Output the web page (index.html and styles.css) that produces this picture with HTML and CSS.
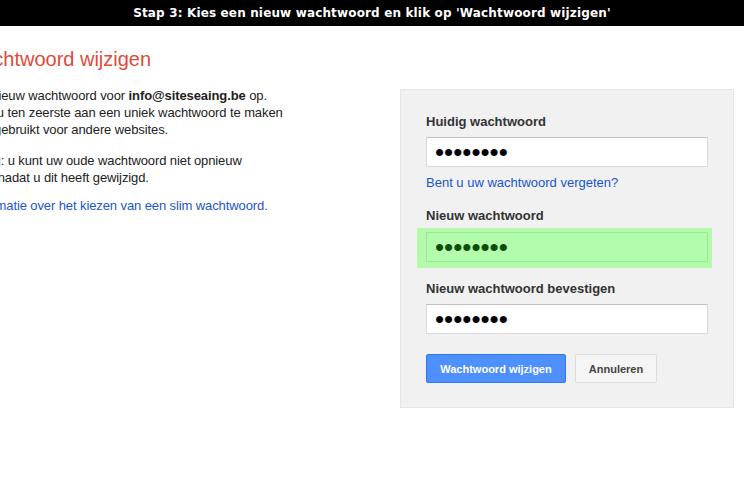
FILE: index.html
```html
<!DOCTYPE html>
<html lang="nl">
<head>
<meta charset="utf-8">
<title>Wachtwoord wijzigen</title>
<link rel="stylesheet" href="styles.css">
</head>
<body>
<div class="topbar">Stap 3: Kies een nieuw wachtwoord en klik op 'Wachtwoord wijzigen'</div>
<div class="main">
  <div class="intro">
    <h1 class="title">Wachtwoord wijzigen</h1>
    <p class="p1">Kies een nieuw wachtwoord voor <b>info@siteseaing.be</b> op.<br>We raden u ten zeerste aan een uniek wachtwoord te maken<br>dat u niet gebruikt voor andere websites.</p>
    <p class="p2">Opmerking: u kunt uw oude wachtwoord niet opnieuw<br>gebruiken nadat u dit heeft gewijzigd.</p>
    <p class="p3"><a href="#" class="link">Meer informatie over het kiezen van een slim wachtwoord.</a></p>
  </div>
  <form class="panel">
    <label class="label first">Huidig wachtwoord</label>
    <input class="field" type="password" value="abcdefgh" readonly>
    <a href="#" class="link forgot">Bent u uw wachtwoord vergeten?</a>
    <label class="label second">Nieuw wachtwoord</label>
    <div class="highlight">
      <input class="field green" type="password" value="abcdefgh" readonly>
    </div>
    <label class="label third">Nieuw wachtwoord bevestigen</label>
    <input class="field" type="password" value="abcdefgh" readonly>
    <div class="actions">
      <button type="button" class="btn primary">Wachtwoord wijzigen</button>
      <button type="button" class="btn secondary">Annuleren</button>
    </div>
  </form>
</div>
</body>
</html>
```
FILE: styles.css
```css
html, body {
  margin: 0;
  padding: 0;
  background: #ffffff;
  overflow: hidden;
}
body {
  font-family: "Liberation Sans", Arial, sans-serif;
  font-size: 13px;
  color: #222222;
}
.topbar {
  height: 26px;
  line-height: 26px;
  background: #000000;
  color: #ffffff;
  font-family: "DejaVu Sans", Verdana, sans-serif;
  font-weight: bold;
  font-size: 12px;
  letter-spacing: 0.15px;
  text-align: center;
}
.main {
  display: flex;
  align-items: flex-start;
}
.intro {
  flex: 0 0 462px;
  margin-left: -62px;
}
.title {
  margin: 21px 0 0 26px;
  font-size: 20px;
  line-height: 24px;
  font-weight: normal;
  color: #dd4b39;
}
.intro p {
  margin: 0;
  line-height: 17px;
  letter-spacing: -0.1px;
}
.p1 { margin-top: 16px !important; }
.p2 { margin-top: 14px !important; }
.p3 { margin-top: 11px !important; }
.intro b { font-weight: bold; color: #222; }
.link {
  color: #1a55d0;
  text-decoration: none;
}
.panel {
  flex: 0 0 auto;
  width: 282px;
  margin-top: 63px;
  padding: 24px 25px 24px 25px;
  background: #f1f1f1;
  border: 1px solid #e5e5e5;
  display: flex;
  flex-direction: column;
  align-items: flex-start;
}
.label {
  display: block;
  font-weight: bold;
  color: #333333;
  line-height: 16px;
  margin-bottom: 7px;
}
.second { margin-top: 17px; margin-bottom: 8px; }
.third { margin-top: 19px; }
.field {
  box-sizing: border-box;
  width: 282px;
  height: 30px;
  margin: 0;
  padding: 0 8px;
  border: 1px solid #d9d9d9;
  border-top-color: #c0c0c0;
  border-radius: 1px;
  background: #ffffff;
  font-family: "Liberation Sans", Arial, sans-serif;
  font-size: 26px;
  color: #000000;
  outline: none;
}
.forgot {
  display: block;
  margin-top: 7px;
  line-height: 17px;
}
.highlight {
  position: relative;
  isolation: isolate;
}
.highlight::before {
  content: "";
  position: absolute;
  top: -4px;
  right: -4px;
  bottom: -6px;
  left: -9px;
  background: #b3fbab;
  z-index: -1;
}
.field.green {
  background: #b3fcac;
  border-color: #9fe397;
  color: #0b4d0b;
}
.actions {
  display: flex;
  gap: 9px;
  margin-top: 20px;
}
.btn {
  box-sizing: border-box;
  height: 29px;
  margin: 0;
  font-family: "Liberation Sans", Arial, sans-serif;
  font-size: 11px;
  font-weight: bold;
  border-radius: 2px;
  cursor: pointer;
}
.primary {
  width: 140px;
  background: #4d90fe;
  border: 1px solid #3079ed;
  color: #ffffff;
}
.secondary {
  width: 82px;
  background: #f5f5f5;
  border: 1px solid #dcdcdc;
  color: #444444;
}
```
